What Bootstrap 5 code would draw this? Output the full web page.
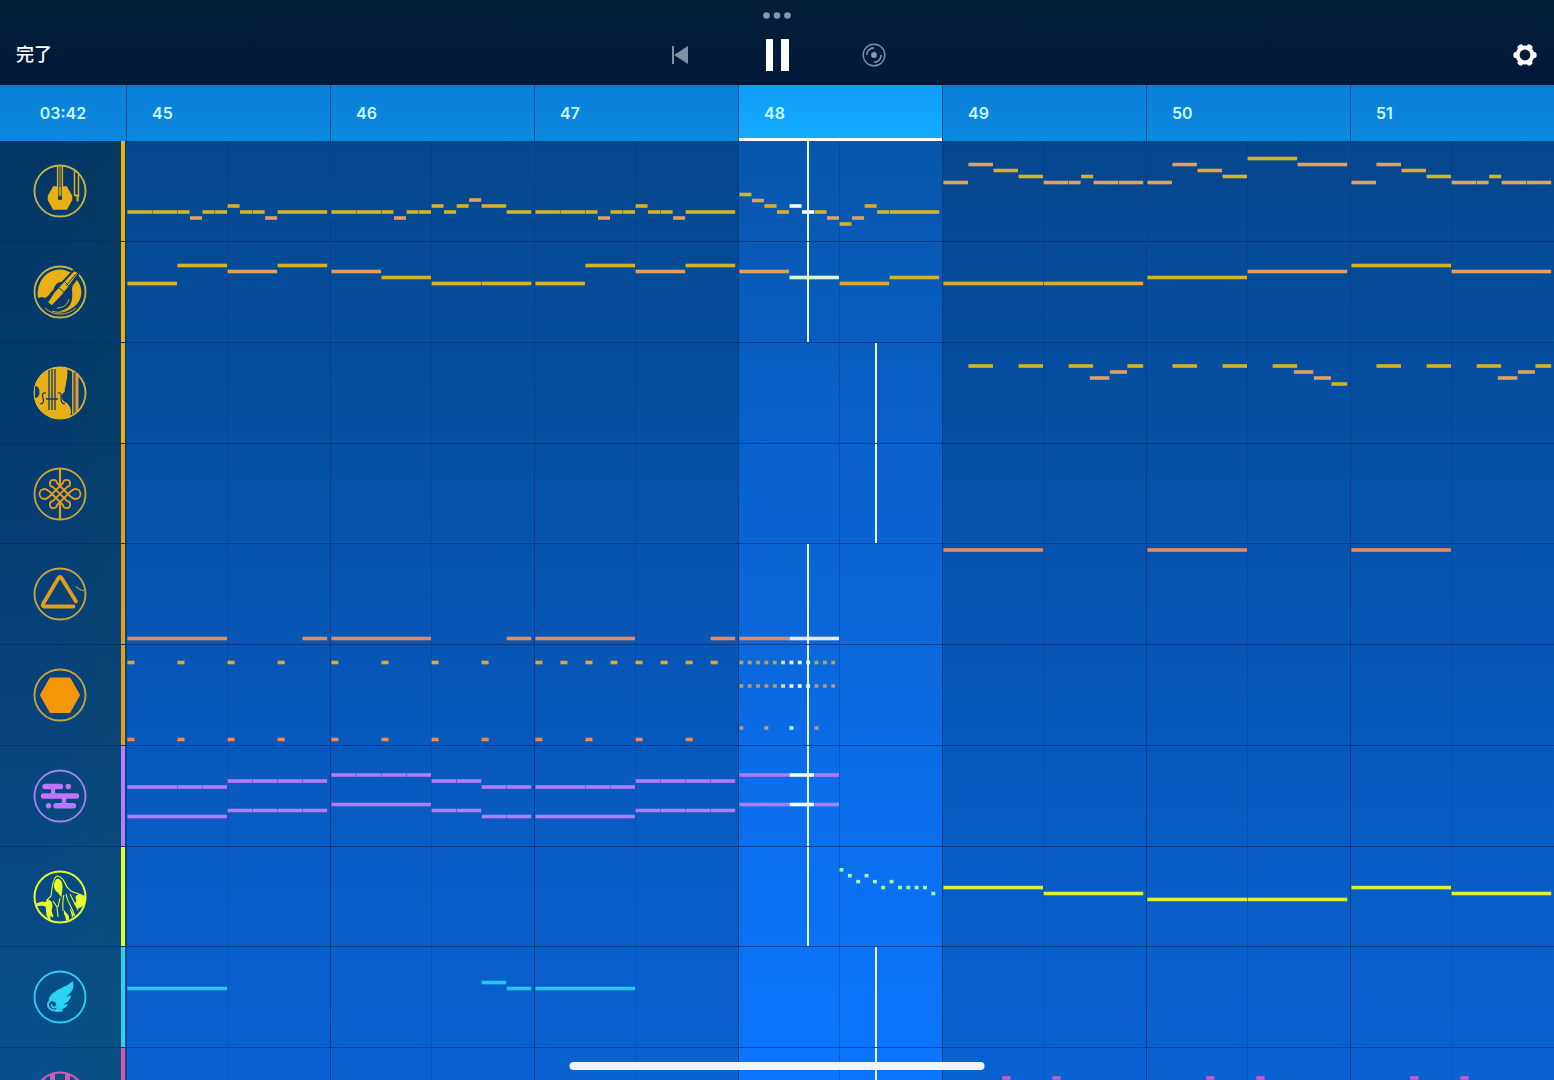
<!DOCTYPE html>
<html lang="ja">
<head>
<meta charset="utf-8">
<meta name="viewport" content="width=device-width, initial-scale=1">
<title>Sequencer</title>
<link rel="stylesheet" href="https://cdn.jsdelivr.net/npm/bootstrap@5.3.0/dist/css/bootstrap.min.css">
<style>
  body { font-family: Inter, "Noto Sans CJK JP", sans-serif; background: #04478d; }
  .app-top { background: linear-gradient(#021e38, #02193a); }
  .grab-dots { height: 27px; padding-top: 12px; }
  .transport { display: grid; grid-template-columns: 1fr auto 1fr; height: 58px; padding: 0 16px 2px; }
  .transport-keys { gap: 63px; }
  .icon-btn { width: 34px; height: 34px; }
  .done-btn { font-family: "Noto Sans CJK JP", sans-serif; font-size: 18px; font-weight: 500; line-height: 24px; padding: 0 0 4px; }
  .gear-btn { width: 26px; height: 26px; }

  .ruler { height: 56px; background: linear-gradient(#0b7fd8, #0d88de); color: #c6faff; font-size: 16px; font-weight: 600; line-height: 24px; }
  .side { width: 126px; flex: none; }
  .ruler-bar { flex: 1 1 0; padding-left: 25px; border-left: 1px solid #07509c; }
  .ruler-bar.playing { background: linear-gradient(#109cf6, #12acff); box-shadow: inset 0 -3px #fff; }

  .stage { display: grid; min-height: 0; }
  .backdrop, .track-list { grid-area: 1 / 1; min-height: 0; }
  .backdrop { background: linear-gradient(#05478c, #0755b4 50%, #0962d2); }
  .side-shade { background: linear-gradient(90deg, transparent 40%, rgba(20, 90, 60, .12)), linear-gradient(#053766, #053b70 30%, #07437c 60%, #07508c); }
  .bar-col { flex: 1 1 0; border-left: 1px solid #04408c;
    background: linear-gradient(90deg, transparent 100px, rgba(0, 40, 110, .22) 100px, rgba(0, 40, 110, .22) 101px, transparent 101px); }
  .bar-col.playing {
    background: linear-gradient(90deg, transparent 100px, rgba(0, 40, 110, .3) 100px, rgba(0, 40, 110, .3) 101px, transparent 101px), linear-gradient(#0856ac, #0a63d0 40%, #0b6fef 75%, #0b76fc); }
  .track-row { height: 101px; border-bottom: 1px solid rgba(1, 42, 108, .6); flex: none; }
  .track-row:nth-child(4n) { height: 100px; }
  .track-side { width: 126px; flex: none; padding-right: 1px; }
  .track-btn { color: var(--tint); padding: 0 1px 0 0; }
  .tint-strip { width: 4px; background: var(--tint); }
  .lane { min-width: 0; }
  .t-gold { --tint: #e8b015; }
  .t-amber { --tint: #e39c1c; }
  .t-violet { --tint: #b67df8; }
  .t-lime { --tint: #e6f92c; }
  .t-cyan { --tint: #2bd3f2; }
  .t-pink { --tint: #d556b8; }
  .home-bar { width: 415px; height: 8px; bottom: 10px; background: #f1f4f8; }
</style>
</head>
<body class="vh-100 overflow-hidden d-flex flex-column position-relative">

<header class="app-top text-white flex-shrink-0">
  <div class="grab-dots d-flex justify-content-center align-items-start">
    <svg width="28" height="7" viewBox="0 0 28 7" fill="#8398b0" aria-hidden="true"><circle cx="3.5" cy="3.5" r="3.3"/><circle cx="14" cy="3.5" r="3.3"/><circle cx="24.500" cy="3.5" r="3.3"/></svg>
  </div>
  <div class="transport align-items-center">
    <div class="d-flex"><button type="button" class="btn border-0 text-white done-btn">完了</button></div>
    <div class="transport-keys d-flex align-items-center">
      <button type="button" class="btn p-0 border-0 icon-btn d-flex align-items-center justify-content-center" aria-label="最初へ戻る">
        <svg width="18" height="20" viewBox="0 0 18 20" fill="#8290a6"><path d="M1 1h2v18H1zM17 1v18L3 10z"/></svg>
      </button>
      <button type="button" class="btn p-0 border-0 icon-btn d-flex align-items-center justify-content-center" aria-label="一時停止">
        <svg width="24" height="32" viewBox="0 0 24 32" fill="#fff"><path d="M1 0h7v32H1zM16 0h8v32h-8z"/></svg>
      </button>
      <button type="button" class="btn p-0 border-0 icon-btn d-flex align-items-center justify-content-center" aria-label="ループ">
        <svg width="24" height="24" viewBox="0 0 24 24" fill="none" stroke="#7d8da6" stroke-width="1.4"><circle cx="12" cy="12" r="10.800"/><circle cx="12" cy="12" r="2.900" fill="#8c9ab0" stroke="none"/><path d="M4.800 12A7.200 7.200 0 0 1 12 4.800M19.200 12A7.200 7.200 0 0 1 12 19.200" stroke-width="1.700"/></svg>
      </button>
    </div>
    <div class="d-flex justify-content-end">
      <button type="button" class="btn p-0 border-0 gear-btn d-flex align-items-center justify-content-center" aria-label="設定">
        <svg width="26" height="26" viewBox="-13 -13 26 26"><g fill="#fff"><circle r="9.400"/><rect x="-11.600" y="-3" width="23.200" height="6" rx="2.600"/><rect x="-11.600" y="-3" width="23.200" height="6" rx="2.600" transform="rotate(60)"/><rect x="-11.600" y="-3" width="23.200" height="6" rx="2.600" transform="rotate(120)"/></g><circle r="5.400" fill="#021b38"/></svg>
      </button>
    </div>
  </div>
</header>

<div class="ruler d-flex flex-shrink-0">
  <div class="side d-flex align-items-center justify-content-center"><time>03:42</time></div>
  <div class="d-flex flex-fill">
    <div class="ruler-bar d-flex align-items-center">45</div>
    <div class="ruler-bar d-flex align-items-center">46</div>
    <div class="ruler-bar d-flex align-items-center">47</div>
    <div class="ruler-bar playing d-flex align-items-center">48</div>
    <div class="ruler-bar d-flex align-items-center">49</div>
    <div class="ruler-bar d-flex align-items-center">50</div>
    <div class="ruler-bar d-flex align-items-center">51</div>
  </div>
</div>

<main class="stage flex-fill overflow-hidden">
  <div class="backdrop d-flex" aria-hidden="true">
    <div class="side side-shade"></div>
    <div class="bar-col"></div><div class="bar-col"></div><div class="bar-col"></div>
    <div class="bar-col playing"></div>
    <div class="bar-col"></div><div class="bar-col"></div><div class="bar-col"></div>
  </div>

  <div class="track-list d-flex flex-column">
    <div class="track-row d-flex t-gold">
      <div class="track-side d-flex">
        <button type="button" class="btn border-0 track-btn flex-fill d-flex align-items-center justify-content-center" aria-label="二胡">
          <svg width="54" height="54" viewBox="0 0 54 54" fill="none" stroke="currentColor"><circle cx="27" cy="27" r="25.500" stroke="#c5b548" stroke-width="1.800"/><path d="M20.500 23h13l5 9v4l-5 9h-13l-5-9v-4z" fill="currentColor" stroke-width="1.500" stroke-linejoin="round"/><path d="M27 3v20" stroke="#0a3d66" stroke-width="5"/><path d="M24.600 2v22M29.400 2v22" stroke-width="1.400"/><path d="M25.800 22v11M28.200 22v11" stroke="#0a3d66" stroke-width=".9"/><path d="M27 2v31" stroke="#d9a81c" stroke-width=".9"/><circle cx="27" cy="34" r="2.200" fill="#0a3d66" stroke="none"/><path d="M41.500 7v25M45.500 11v22" stroke-width="1.400"/><path d="M42 31.500h2.600v6" stroke-width="2"/></svg>
        </button><span class="tint-strip"></span>
      </div>
      <div class="lane flex-fill"></div>
    </div>

    <div class="track-row d-flex t-gold">
      <div class="track-side d-flex">
        <button type="button" class="btn border-0 track-btn flex-fill d-flex align-items-center justify-content-center" aria-label="筆">
          <svg width="54" height="54" viewBox="0 0 54 54" fill="none" stroke="currentColor"><circle cx="27" cy="27" r="25.500" stroke="#c5b548" stroke-width="1.800"/><path d="M5 33C3 18 12 5.500 26 4.500c6 0 11 2 14 5L33 18c-5-2-9-1-11 3-2 2 0 4-3 5l-4 5-3 2-3-1z" fill="currentColor" stroke="none"/><path d="M44 15c6 8 6 18-1 25-5 5-12 7-17 6 8-1 12-5 13-12 1-6-1-9 1-14z" fill="currentColor" stroke="none"/><path d="M12 43c8 8 22 8 31 0M24 43c7 0 11-4 12-9M19 46c8 3 17 0 21-5" stroke-width="1"/><path d="M46 8L34.500 24l-6 7.500L19 41.500l-5-4 7-11 6.500-7L41 5z" fill="currentColor" stroke="#0a3d66" stroke-width="2"/><path d="M32 17l5 5M26 23l6 5M43 9L33 21" stroke="#0a3d66" stroke-width="1"/></svg>
        </button><span class="tint-strip"></span>
      </div>
      <div class="lane flex-fill"></div>
    </div>

    <div class="track-row d-flex t-gold">
      <div class="track-side d-flex">
        <button type="button" class="btn border-0 track-btn flex-fill d-flex align-items-center justify-content-center" aria-label="バイオリン">
          <svg width="54" height="54" viewBox="0 0 54 54" fill="none" stroke="currentColor"><path d="M34 2C18-3 1 9 1 27s15 29 36 24l1-5c0-4-2-7-4-9-4-1-6-5-5-8 1-2 2-3 3-3-1-2 1-6 1-9 1-5 2-8 1-15z" fill="currentColor" stroke="none"/><circle cx="27" cy="27" r="25.500" stroke="#d9b32b" stroke-width="1.800"/><path d="M2 20l3 1c2 3 2 7 0 10l-3 1z" fill="#0a3d78" stroke="none"/><path d="M16 4v40M19 3v41M22 3v41M13 33h12" stroke="#0a3d78" stroke-width="1.300"/><path d="M13 27c-4-1-4 2-3 5s1 6-3 6M25 27c4-1 3 2 3 5s1 6 4 6" stroke="#0a3d78" stroke-width="1.200"/><path d="M39.800 5v43" stroke-width="1.500"/><path d="M43.500 7v39" stroke="#d99c48" stroke-width="4"/><path d="M42 6v40" stroke="#0a3d78" stroke-width=".8"/></svg>
        </button><span class="tint-strip"></span>
      </div>
      <div class="lane flex-fill"></div>
    </div>

    <div class="track-row d-flex t-amber">
      <div class="track-side d-flex">
        <button type="button" class="btn border-0 track-btn flex-fill d-flex align-items-center justify-content-center" aria-label="中国結び">
          <svg width="54" height="54" viewBox="0 0 54 54" fill="none" stroke="currentColor" stroke-width="1.800"><circle cx="27" cy="27" r="25.500" stroke="#c9a438"/><path d="M27 1v18M27 35v18" stroke-width="2.200"/><path d="M24 16L36 28c3 3 4 4 6.500 4a5 5 0 0 0 0-10c-2.500 0-3.500 1-6.500 4L24 38a3.600 3.600 0 1 1-4-4L34 20a3.600 3.600 0 1 0-4-4L18 28c-3 3-4 4-6.500 4a5 5 0 0 1 0-10c2.500 0 3.500 1 6.500 4L30 38a3.600 3.600 0 1 0 4-4L20 20a3.600 3.600 0 1 1 4-4z"/></svg>
        </button><span class="tint-strip"></span>
      </div>
      <div class="lane flex-fill"></div>
    </div>

    <div class="track-row d-flex t-amber">
      <div class="track-side d-flex">
        <button type="button" class="btn border-0 track-btn flex-fill d-flex align-items-center justify-content-center" aria-label="トライアングル">
          <svg width="54" height="54" viewBox="0 0 54 54" fill="none" stroke="currentColor"><circle cx="27" cy="27" r="25.500" stroke="#c9a438" stroke-width="1.800"/><path d="M43 34.500L28.500 11q-1.500-2-3 0L10 37q-1 2.500 1.500 2.500H40.500" stroke-width="3.800" stroke-linecap="round" stroke-linejoin="round"/><path d="M43 19.500l3 2.500 5 2" stroke="#a99c58" stroke-width="1.200"/></svg>
        </button><span class="tint-strip"></span>
      </div>
      <div class="lane flex-fill"></div>
    </div>

    <div class="track-row d-flex t-amber">
      <div class="track-side d-flex">
        <button type="button" class="btn border-0 track-btn flex-fill d-flex align-items-center justify-content-center" aria-label="ドラム">
          <svg width="54" height="54" viewBox="0 0 54 54" fill="none"><circle cx="27" cy="27" r="25.500" stroke="#c9a438" stroke-width="1.800"/><path d="M17.500 10.500h19L46 27l-9.500 17h-19L8 27z" fill="#f59708" stroke="#f59708" stroke-width="2" stroke-linejoin="round"/></svg>
        </button><span class="tint-strip"></span>
      </div>
      <div class="lane flex-fill"></div>
    </div>

    <div class="track-row d-flex t-violet">
      <div class="track-side d-flex">
        <button type="button" class="btn border-0 track-btn flex-fill d-flex align-items-center justify-content-center" aria-label="パッド">
          <svg width="54" height="54" viewBox="0 0 54 54" fill="none" stroke="#bd76fb" stroke-linecap="round" stroke-width="5.400"><circle cx="27" cy="27" r="25.500" stroke="#a883ee" stroke-width="1.800"/><path d="M12 17.500h15.500M35.200 17.500h.1M10.500 27h33M15.500 36.700h.1M23 36.700h17.500"/><path d="M17 19h6q-2 3 0 7h-6q2-4 0-7zM28 28h6q-2 4 0 7h-6q2-3 0-7z" fill="#bd76fb" stroke="none"/></svg>
        </button><span class="tint-strip"></span>
      </div>
      <div class="lane flex-fill"></div>
    </div>

    <div class="track-row d-flex t-lime">
      <div class="track-side d-flex">
        <button type="button" class="btn border-0 track-btn flex-fill d-flex align-items-center justify-content-center" aria-label="クワイア">
          <svg width="54" height="54" viewBox="0 0 54 54" fill="none" stroke="currentColor" stroke-width="1.100"><circle cx="27" cy="27" r="25.500" stroke-width="2"/><path d="M14 30l4-4 1-7c1-7 2-12 5-13 4 0 6 3 8 7 1 4 3 5 6 8 3 2 7 2 10 4l3 2"/><path d="M21.500 17c0-4 1-7 3-8 3 0 4.500 4 4.500 8 0 4-1 7-1 9l-3-4c-2-1-3-3-3.500-5z" fill="currentColor"/><path d="M3 34l6-2 5 1-1 3-5-1-5 1zM14 30c4 0 5 3 5 6l-1 5 2 6-3-3v7l-3-6c0-5-2-10 0-15z" fill="currentColor"/><path d="M52 27c-3-2-7-3-9 0l1 4-2 3 3 4 4-2c3-2 3-5 3-9z" fill="currentColor"/><path d="M20 31l4 6 1 10M27 28l-2 9M31 25c-2 6-1 11-1 16M33 24c1 7 4 10 6 15l3 7M37 24l4 8 4 8"/><path d="M31 40l5 6v4l-3 1c0-5-3-7-2-11zM37 38l4 7-2 3c0-4-2-6-2-10z" fill="currentColor" stroke="none"/></svg>
        </button><span class="tint-strip"></span>
      </div>
      <div class="lane flex-fill"></div>
    </div>

    <div class="track-row d-flex t-cyan">
      <div class="track-side d-flex">
        <button type="button" class="btn border-0 track-btn flex-fill d-flex align-items-center justify-content-center" aria-label="翼">
          <svg width="54" height="54" viewBox="0 0 54 54" fill="none" stroke="currentColor"><circle cx="27" cy="27" r="25.500" stroke-width="1.800"/><path d="M39.800 11c2 6 0 11-7 16l5.500-2c-1 5-4 8-8 9.500l4.500-.5c-1 3-3 4.500-6 5l1.500 2H21c4-3 5-8 1-10.500-2-1-4-1-6.500.5 1-6 4-8 10-11.500 6-3 10-4.500 14.300-8.500z" fill="currentColor" stroke="none"/><path d="M29 40.500c-8 1.500-14-1-14-6 0-3 3-5 6-4 4 1 4 7 0 7-2 0-3-2-2-3" stroke-width="1.900"/></svg>
        </button><span class="tint-strip"></span>
      </div>
      <div class="lane flex-fill"></div>
    </div>

    <div class="track-row d-flex t-pink">
      <div class="track-side d-flex">
        <button type="button" class="btn border-0 track-btn flex-fill d-flex align-items-center justify-content-center" aria-label="ピアノ">
          <svg width="54" height="54" viewBox="0 0 54 54" fill="none" stroke="currentColor"><circle cx="27" cy="27" r="25.500" stroke-width="2"/><path d="M17 3h5v31h-5zM32 3h5v31h-5z" fill="currentColor" stroke="none"/><path d="M11 7v40M43 7v40M27 34v18" stroke-width="1.500"/></svg>
        </button><span class="tint-strip"></span>
      </div>
      <div class="lane flex-fill"></div>
    </div>
  </div>
</main>

<div class="home-bar position-absolute start-50 translate-middle-x rounded-pill"></div>

<script src="https://cdn.jsdelivr.net/npm/bootstrap@5.3.0/dist/js/bootstrap.bundle.min.js"></script>
<script>
  // Each note: [start, length, y, colour]; start and length are in sixteenths of a bar.
  const BAR = 204, SIXTEENTH = 12.52, INSET = 1.4;
  const Y = '#d3b426', G = '#ddaa30', O = '#e0a060', R = '#e98b58', W = '#f2fbff',
        V = '#b37bf8', L = '#dfef38', C = '#22c8f2', P = '#c55fc8', D = '#a4f7a8', S = '#b49a80';
  const PHASE_A = 681, PHASE_B = 749;

  const every = (step, count, len, y, colour, from = 0) =>
    Array.from({ length: count }, (_, i) => [from + i * step, len, y, typeof colour === 'function' ? colour(i) : colour]);

  const lead = [[0,2,71,Y],[2,2,71,Y],[4,1,71,Y],[5,1,77,O],[6,1,71,Y],[7,1,71,Y],[8,1,65,Y],[9,1,71,Y],[10,1,71,Y],[11,1,77,O],[12,4,71,Y]];
  const answer = [[0,2,41.5,O],[2,2,23.5,O],[4,2,29.5,G],[6,2,35.5,Y],[8,2,41.5,O],[10,1,41.5,O],[11,1,35.5,Y],[12,2,41.5,O],[14,2,41.5,O]];
  const bow = [[0,4,41.5,Y],[4,4,23.5,Y],[8,4,29.5,O],[12,4,23.5,Y]];
  const violin = [[2,2,23,Y],[6,2,23,Y],[10,2,23,Y],[11.7,1.6,35,O],[13.3,1.4,29,O],[14.7,1.3,23,Y]];
  const bass = [[0,8,94.5,R],[14,2,94.5,R]];
  const beat = [...every(4, 4, .6, 17.5, G), ...every(4, 4, .6, 94.5, R)];
  const padLow = [[0,4,41,V],[4,2,41,V],[6,2,41,V],[0,8,70.5,V]];
  const padEnd = [...every(2, 4, 2, 35, V, 8), ...every(2, 4, 2, 64.5, V, 8)];
  const lit = base => i => (i >= 6 && i <= 8 ? W : i === 5 ? '#e4d898' : base);

  const tracks = [
    { head: PHASE_A, bars: [lead,
      [[0,2,71,Y],[2,2,71,Y],[4,1,71,Y],[5,1,77,O],[6,1,71,Y],[7,1,71,Y],[8,1,65,Y],[9,1,71,Y],[10,1,65,Y],[11,1,59,O],[12,2,65,Y],[14,2,71,Y]],
      lead,
      [[0,1,53.5,Y],[1,1,59.5,O],[2,1,65,G],[3,1,71,Y],[4,1,65,W],[5,1,71,W],[6,1,71,Y],[7,1,77,O],[8,1,83,Y],[9,1,77,O],[10,1,65,G],[11,1,71,Y],[12,4,71,Y]],
      answer, [...answer.slice(0, 4), [8,4,17.5,Y],[12,4,23.5,O]], answer] },
    { head: PHASE_A, bars: [bow, [[0,4,29.5,O],[4,4,35.5,Y],[8,4,41.5,Y],[12,4,41.5,Y]], bow,
      [[0,4,29.5,O],[4,4,35.5,'#d8f8dc'],[8,4,41.5,G],[12,4,35.5,Y]],
      [[0,8,41.5,G],[8,8,41.5,G]], [[0,8,35.5,Y],[8,8,29.5,O]], [[0,8,23.5,Y],[8,8,29.5,O]]] },
    { head: PHASE_B, bars: [[], [], [], [], violin,
      [...violin.slice(0, 3), [11.7,1.6,29,O],[13.3,1.4,35,O],[14.7,1.3,41,Y]], violin] },
    { head: PHASE_B, bars: [] },
    { head: PHASE_A, bars: [bass, bass, bass, [[0,4,94.5,R],[4,4,94.5,'#efe6ec']], [[0,8,6,R]], [[0,8,6,R]], [[0,8,6,R]]] },
    { head: PHASE_A, bars: [beat, beat, [...every(2, 8, .6, 17.5, G), ...every(4, 4, .6, 94.5, R)],
      [...every(2 / 3, 12, .35, 17.5, lit('#b5a352')), ...every(2 / 3, 12, .35, 41, lit(S)), ...every(2, 4, .35, 83, i => i === 2 ? '#b8fbff' : S)]] },
    { head: PHASE_A, bars: [[...padLow, ...padEnd],
      [...every(2, 4, 2, 29, V), [0,8,58.5,V], [8,2,35,V],[10,2,35,V],[12,2,41,V],[14,2,41,V],[8,2,64.5,V],[10,2,64.5,V],[12,2,70.5,V],[14,2,70.5,V]],
      [...padLow, ...padEnd],
      [[0,4,29,V],[4,2,29,W],[6,2,29,V],[0,4,58.5,V],[4,2,58.5,W],[6,2,58.5,V]]] },
    { head: PHASE_A, bars: [[], [], [],
      [23,29,35,29,35,41,35,41,41,41,41,47].map((y, i) => [8 + i * 2 / 3, .35, y, D]),
      [[0,8,41,L],[8,8,47,L]], [[0,8,53,L],[8,8,53,L]], [[0,8,41,L],[8,8,47,L]]] },
    { head: PHASE_B, bars: [[[0,8,41.5,C]], [[12,2,35.5,C],[14,2,41.5,C]], [[0,8,41.5,C]]] },
    { head: PHASE_B, bars: [[], [], [], [], [[4.7,.7,30,P],[8.7,.7,30,P]], [[4.7,.7,30,P],[8.7,.7,30,P]], [[4.7,.7,30,P],[8.7,.7,30,P]]] }
  ];

  document.querySelectorAll('.lane').forEach((lane, t) => {
    const notes = tracks[t].bars.flatMap((bar, b) => bar.map(([s, n, y, c]) =>
      `<rect x="${(b * BAR + INSET + s * SIXTEENTH).toFixed(2)}" y="${y - 1.8}" width="${(n * SIXTEENTH - .5).toFixed(2)}" height="3.6" fill="${c}"/>`));
    lane.innerHTML = `<svg class="d-block w-100 h-100 overflow-visible" viewBox="0 0 1428 100" preserveAspectRatio="none" aria-hidden="true">${notes.join('')}<rect x="${tracks[t].head}" y="0" width="2" height="100" fill="#e4f6ff"/></svg>`;
  });
</script>
</body>
</html>
